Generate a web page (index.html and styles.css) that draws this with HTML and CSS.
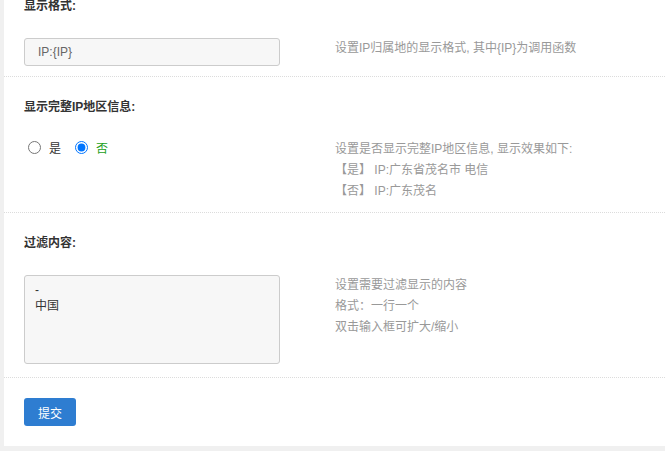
FILE: index.html
```html
<!DOCTYPE html>
<html lang="zh-CN">
<head>
<meta charset="utf-8">
<title>IP归属地设置</title>
<link rel="stylesheet" href="styles.css">
</head>
<body>
<div class="panel">
  <div class="section">
    <div class="label">显示格式:</div>
    <div class="row">
      <div class="field"><input class="text-input" type="text" value="IP:{IP}"></div>
      <div class="hint"><p>设置IP归属地的显示格式, 其中{IP}为调用函数</p></div>
    </div>
  </div>
  <div class="section">
    <div class="label">显示完整IP地区信息:</div>
    <div class="row">
      <div class="field radios">
        <label class="radio"><input type="radio" name="full"><span>是</span></label>
        <label class="radio radio-on"><input type="radio" name="full" checked><span>否</span></label>
      </div>
      <div class="hint">
        <p>设置是否显示完整IP地区信息, 显示效果如下:</p>
        <p>【是】 IP:广东省茂名市 电信</p>
        <p>【否】 IP:广东茂名</p>
      </div>
    </div>
  </div>
  <div class="section">
    <div class="label">过滤内容:</div>
    <div class="row">
      <div class="field"><textarea class="text-area">-
中国</textarea></div>
      <div class="hint">
        <p>设置需要过滤显示的内容</p>
        <p>格式：一行一个</p>
        <p>双击输入框可扩大/缩小</p>
      </div>
    </div>
  </div>
  <div class="actions">
    <button class="btn" type="button">提交</button>
  </div>
</div>
</body>
</html>
```
FILE: styles.css
```css
html, body {
  margin: 0;
  padding: 0;
}
body {
  background: #f0f0f0;
  font-family: "Liberation Sans", "Noto Sans CJK SC", sans-serif;
  font-size: 12px;
  color: #333;
  height: 451px;
  overflow: hidden;
}
.panel {
  margin: -24px 0 0 4px;
  background: #fff;
}
.section {
  padding: 21px 20px 10px;
  border-bottom: 1px dotted #dcdcdc;
}
.label {
  font-weight: bold;
  line-height: 18px;
  color: #333;
  margin-bottom: 23px;
}
.row {
  display: grid;
  grid-template-columns: 256px 1fr;
  column-gap: 55px;
  align-items: start;
}
.text-input {
  display: block;
  box-sizing: border-box;
  width: 256px;
  height: 28px;
  margin: 0;
  padding: 0 13px;
  border: 1px solid #ccc;
  border-radius: 3px;
  background: #f7f7f7;
  font-family: inherit;
  font-size: 12px;
  color: #666;
  outline: none;
}
.text-area {
  display: block;
  box-sizing: border-box;
  width: 256px;
  height: 89px;
  margin: 0 0 3px;
  padding: 6px 10px;
  border: 1px solid #ccc;
  border-radius: 3px;
  background: #f7f7f7;
  font-family: inherit;
  font-size: 12px;
  line-height: 16px;
  color: #333;
  resize: none;
  outline: none;
}
.hint {
  color: #999;
  line-height: 21px;
}
.hint p {
  margin: 0;
}
.radios {
  display: flex;
  align-items: center;
  height: 17px;
}
.radio {
  display: flex;
  align-items: center;
  margin-right: 10px;
}
.radio input {
  width: 13px;
  height: 13px;
  margin: 0 8px 0 4px;
}
.radio-on span {
  color: #22a022;
}
.actions {
  padding: 20px;
}
.btn {
  display: block;
  width: 52px;
  height: 28px;
  border: 0;
  border-radius: 3px;
  background: #2e7dd1;
  color: #fff;
  font-family: inherit;
  font-size: 12px;
  padding: 0;
}
```
